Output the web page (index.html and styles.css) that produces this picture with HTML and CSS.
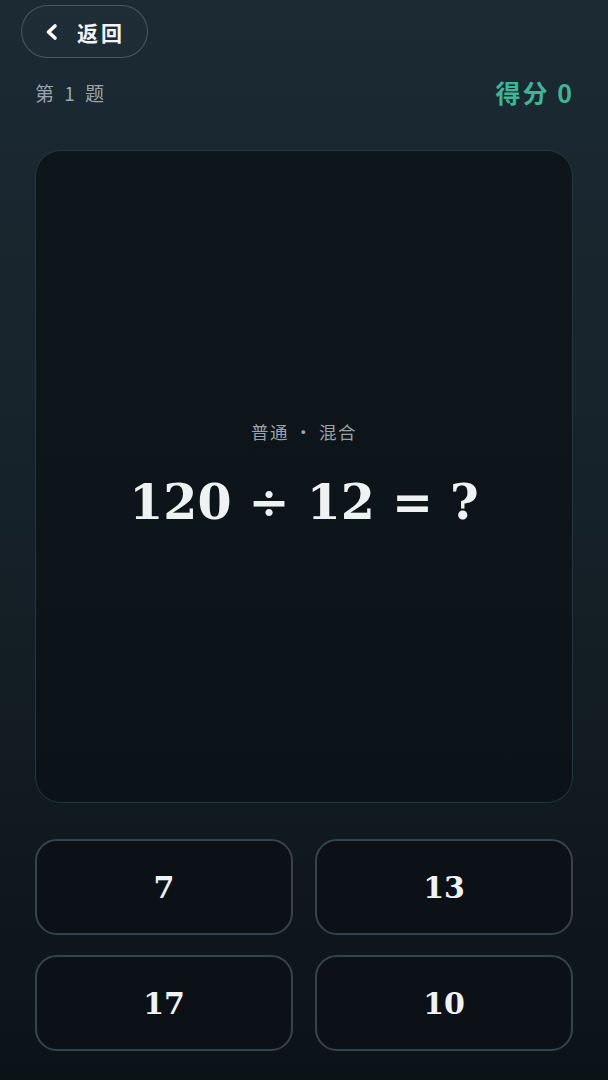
FILE: index.html
```html
<!DOCTYPE html>
<html lang="zh">
<head>
<meta charset="utf-8">
<title>Quiz</title>
<link rel="stylesheet" href="styles.css">
</head>
<body>
<div class="page">
  <div class="topbar">
    <button class="back">
      <svg class="chev" width="15" height="18" viewBox="0 0 15 18"><path d="M11 3 L4.5 9 L11 15" fill="none" stroke="#ffffff" stroke-width="3.6" stroke-linecap="round" stroke-linejoin="round"/></svg>
      <span>返回</span>
    </button>
  </div>
  <div class="status">
    <span class="qnum">第 1 题</span>
    <span class="score">得分 0</span>
  </div>
  <div class="card">
    <div class="tag">普通 · 混合</div>
    <div class="eq">120 ÷ 12 = ?</div>
  </div>
  <div class="answers">
    <button class="ans">7</button>
    <button class="ans">13</button>
    <button class="ans">17</button>
    <button class="ans">10</button>
  </div>
</div>
</body>
</html>
```
FILE: styles.css
```css
html, body {
  margin: 0;
  padding: 0;
}
body {
  width: 608px;
  height: 1080px;
  overflow: hidden;
  background: linear-gradient(180deg, #1c2a33 0%, #16222a 45%, #0c1317 100%);
  font-family: "Noto Sans CJK SC", "Noto Sans", sans-serif;
  color: #e8eef0;
}
.page {
  padding: 5px 35px 0 35px;
  display: flex;
  flex-direction: column;
}
.topbar {
  display: flex;
  margin-left: -14px;
}
.back {
  width: 127px;
  height: 53px;
  border-radius: 27px;
  border: 1px solid rgba(255,255,255,0.2);
  background: rgba(255,255,255,0.015);
  color: #f2f5f6;
  font-family: "Noto Sans CJK SC", sans-serif;
  font-size: 21px;
  font-weight: 700;
  letter-spacing: 3px;
  display: flex;
  align-items: center;
  padding: 0 0 0 22px;
  gap: 18px;
  box-sizing: border-box;
}
.chev { display: block; }
.status {
  display: flex;
  justify-content: space-between;
  align-items: center;
  margin-top: 18px;
  height: 32px;
}
.qnum {
  font-size: 19px;
  color: #9aa5ab;
  letter-spacing: 3px;
}
.score {
  font-size: 25px;
  font-weight: 700;
  color: #3fb596;
  letter-spacing: 2px;
  margin-right: -1px;
}
.card {
  margin-top: 42px;
  height: 653px;
  border: 1px solid #20393e;
  border-radius: 26px;
  background: linear-gradient(180deg, #0e161c 0%, #0c1318 100%);
  display: flex;
  flex-direction: column;
  align-items: center;
  justify-content: center;
  gap: 26px;
  box-sizing: border-box;
}
.tag {
  font-size: 17.5px;
  color: #9aa3a8;
  letter-spacing: 1.5px;
}
.eq {
  font-family: "DejaVu Serif", serif;
  font-weight: 700;
  font-size: 49px;
  color: #eef2f3;
  line-height: 64px;
}
.answers {
  margin-top: 36px;
  display: grid;
  grid-template-columns: 1fr 1fr;
  column-gap: 22px;
  row-gap: 20px;
}
.ans {
  height: 96px;
  border: 2px solid #37434c;
  border-radius: 22px;
  background: #0b1116;
  color: #f0f3f4;
  font-family: "DejaVu Serif", serif;
  font-weight: 700;
  font-size: 30px;
}
```
